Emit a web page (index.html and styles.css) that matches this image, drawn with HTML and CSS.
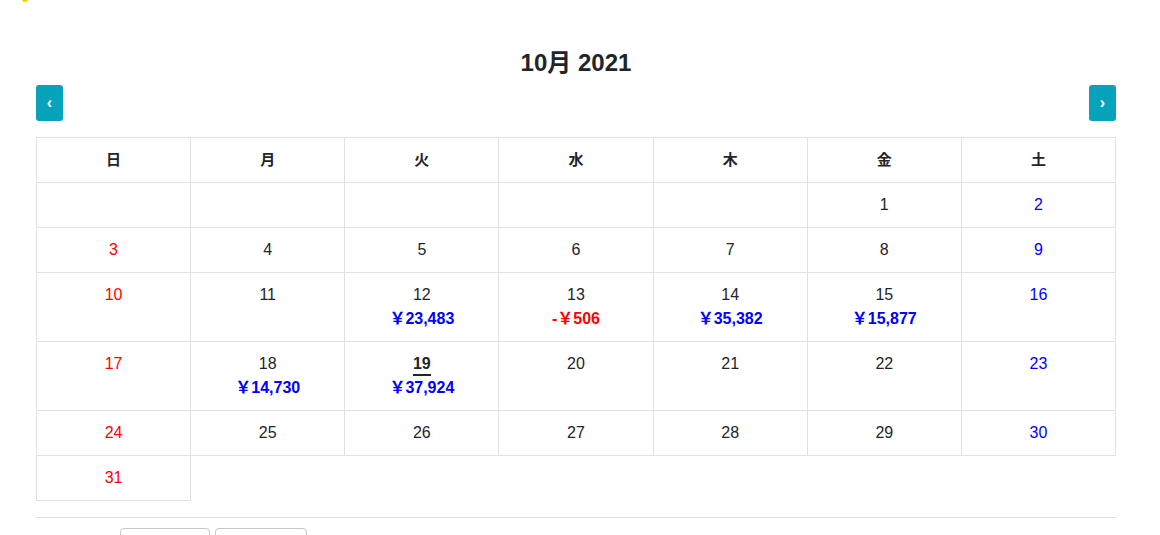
FILE: index.html
```html
<!DOCTYPE html>
<html lang="ja">
<head>
<meta charset="utf-8">
<title>カレンダー</title>
<link rel="stylesheet" href="styles.css">
</head>
<body>
<span class="dot"></span>
<div class="wrap">
  <h2 class="title">10月 2021</h2>
  <div class="nav">
    <button class="navbtn">‹</button>
    <button class="navbtn">›</button>
  </div>
  <table class="cal">
    <thead>
      <tr><th>日</th><th>月</th><th>火</th><th>水</th><th>木</th><th>金</th><th>土</th></tr>
    </thead>
    <tbody>
      <tr><td></td><td></td><td></td><td></td><td></td><td><div class="d">1</div></td><td class="sat"><div class="d">2</div></td></tr>
      <tr><td class="sun"><div class="d">3</div></td><td><div class="d">4</div></td><td><div class="d">5</div></td><td><div class="d">6</div></td><td><div class="d">7</div></td><td><div class="d">8</div></td><td class="sat"><div class="d">9</div></td></tr>
      <tr><td class="sun"><div class="d">10</div></td><td><div class="d">11</div></td><td><div class="d">12</div><div class="amt plus">￥23,483</div></td><td><div class="d">13</div><div class="amt minus">-￥506</div></td><td><div class="d">14</div><div class="amt plus">￥35,382</div></td><td><div class="d">15</div><div class="amt plus">￥15,877</div></td><td class="sat"><div class="d">16</div></td></tr>
      <tr><td class="sun"><div class="d">17</div></td><td><div class="d">18</div><div class="amt plus">￥14,730</div></td><td><div class="d"><span class="today">19</span></div><div class="amt plus">￥37,924</div></td><td><div class="d">20</div></td><td><div class="d">21</div></td><td><div class="d">22</div></td><td class="sat"><div class="d">23</div></td></tr>
      <tr><td class="sun"><div class="d">24</div></td><td><div class="d">25</div></td><td><div class="d">26</div></td><td><div class="d">27</div></td><td><div class="d">28</div></td><td><div class="d">29</div></td><td class="sat"><div class="d">30</div></td></tr>
      <tr class="last"><td class="sun"><div class="d">31</div></td><td class="empty" colspan="6"></td></tr>
    </tbody>
  </table>
  <hr class="rule">
  <div class="actions">
    <button class="obtn"></button>
    <button class="obtn b2"></button>
  </div>
</div>
</body>
</html>
```
FILE: styles.css
```css
html, body {
  margin: 0;
  padding: 0;
  background: #fff;
}
body {
  font-family: "Liberation Sans", Arial, "Noto Sans CJK JP", sans-serif;
  color: #212529;
  position: relative;
  overflow: hidden;
  height: 535px;
}
.dot {
  position: absolute;
  left: 22px;
  top: -3px;
  width: 6px;
  height: 5px;
  border-radius: 50%;
  background: #f5d000;
}
.wrap {
  width: 1080px;
  margin-left: 36px;
  padding-top: 48px;
}
.title {
  margin: 0;
  text-align: center;
  font-size: 24px;
  font-weight: bold;
  line-height: 30px;
  color: #212529;
}
.nav {
  display: flex;
  justify-content: space-between;
  margin-top: 7px;
}
.navbtn {
  width: 27px;
  height: 36px;
  border: none;
  border-radius: 3px;
  background: #07a3bb;
  color: #fff;
  font-family: "Liberation Sans", Arial, sans-serif;
  font-size: 16px;
  font-weight: bold;
  padding: 0;
  line-height: 36px;
}
.cal {
  margin-top: 16px;
  width: 1080px;
  border-collapse: collapse;
  table-layout: fixed;
  font-size: 16px;
}
.cal th, .cal td {
  border: 1px solid #dee2e6;
  text-align: center;
  vertical-align: top;
  padding: 10px 0;
  line-height: 24px;
}
.cal th {
  font-weight: bold;
  font-size: 15px;
  height: 24px;
}
.cal td {
  height: 24px;
}
.cal tr.last td.empty {
  border: none;
  border-top: 1px solid #dee2e6;
  border-left: 1px solid #dee2e6;
}
.sun { color: #ff0000; }
.sat { color: #0000ff; }
.today {
  font-weight: bold;
  border-bottom: 2px solid #212529;
  line-height: 20px;
  display: inline-block;
}
.amt {
  font-weight: bold;
  line-height: 24px;
}
.plus { color: #0000ff; }
.minus { color: #ff0000; }
.rule {
  margin: 16px 0 0;
  border: none;
  border-top: 1px solid #dddddd;
  height: 0;
}
.actions {
  display: flex;
  gap: 5px;
  margin-top: 10px;
  padding-left: 84px;
}
.obtn {
  width: 90px;
  height: 34px;
  background: #fff;
  border: 1px solid #c4c8cc;
  border-radius: 4px;
}
.obtn.b2 {
  width: 92px;
}
```
